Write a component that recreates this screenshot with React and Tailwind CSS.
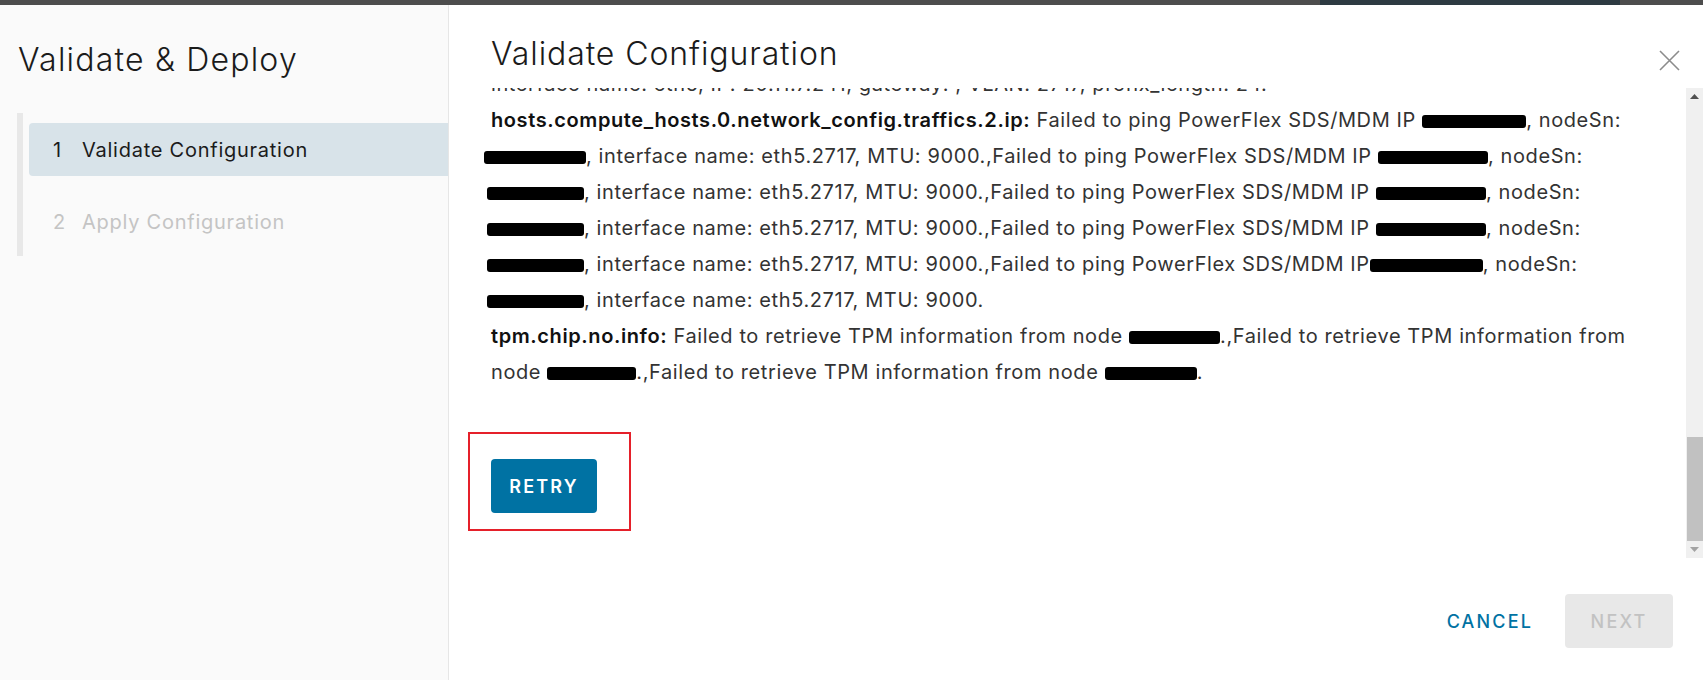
import React from "react";

const font = { fontFamily: "Inter, 'Noto Sans', sans-serif" };

function Redact({ w, shift = 0 }) {
  return (
    <span
      className="inline-block h-[13px] rounded-[3px] bg-black align-middle"
      style={{ width: w, marginLeft: shift }}
    />
  );
}

const rows = [
  [
    <b key="b" className="font-semibold text-[#111]">
      hosts.compute_hosts.0.network_config.traffics.2.ip:
    </b>,
    " Failed to ping PowerFlex SDS/MDM IP ",
    <Redact key="r" w={104} />,
    ", nodeSn:",
  ],
  [
    <Redact key="a" w={102} shift={-7} />,
    ", interface name: eth5.2717, MTU: 9000.,Failed to ping PowerFlex SDS/MDM IP ",
    <Redact key="r" w={110} />,
    ", nodeSn:",
  ],
  [
    <Redact key="a" w={97} shift={-4} />,
    ", interface name: eth5.2717, MTU: 9000.,Failed to ping PowerFlex SDS/MDM IP ",
    <Redact key="r" w={110} />,
    ", nodeSn:",
  ],
  [
    <Redact key="a" w={97} shift={-4} />,
    ", interface name: eth5.2717, MTU: 9000.,Failed to ping PowerFlex SDS/MDM IP ",
    <Redact key="r" w={110} />,
    ", nodeSn:",
  ],
  [
    <Redact key="a" w={97} shift={-4} />,
    ", interface name: eth5.2717, MTU: 9000.,Failed to ping PowerFlex SDS/MDM IP",
    <Redact key="r" w={113} />,
    ", nodeSn:",
  ],
  [
    <Redact key="a" w={97} shift={-4} />,
    ", interface name: eth5.2717, MTU: 9000.",
  ],
  [
    <b key="b" className="font-semibold text-[#111]">
      tpm.chip.no.info:
    </b>,
    " Failed to retrieve TPM information from node ",
    <Redact key="r" w={91} />,
    ".,Failed to retrieve TPM information from",
  ],
  [
    "node ",
    <Redact key="a" w={89} />,
    ".,Failed to retrieve TPM information from node ",
    <Redact key="r" w={92} />,
    ".",
  ],
];

function Steps() {
  return (
    <div className="ml-[17px] mt-[33px] border-l-[6px] border-[#e8e8e8] pt-[10px] pb-[8px]">
      <div className="ml-[6px] flex h-[53px] items-center rounded-l-[4px] bg-[#d8e3e9] pl-[24px] text-[20px] tracking-[0.75px] text-[#1b1b1b]">
        <span className="w-[29px]">1</span>
        <span>Validate Configuration</span>
      </div>
      <div className="ml-[6px] mt-[19px] flex h-[53px] items-center pl-[24px] text-[20px] tracking-[0.75px] text-[#c4c4c4]">
        <span className="w-[29px]">2</span>
        <span>Apply Configuration</span>
      </div>
    </div>
  );
}

function Scrollbar() {
  return (
    <div className="flex w-[17px] shrink-0 flex-col bg-[#f0f0f0]">
      <div className="flex h-[17px] items-center justify-center">
        <svg width="9" height="5" viewBox="0 0 9 5">
          <path d="M0 5 L4.5 0 L9 5 Z" fill="#505050" />
        </svg>
      </div>
      <div className="flex flex-1 flex-col justify-end">
        <div className="ml-[1px] h-[104px] bg-[#c1c1c1]" />
      </div>
      <div className="flex h-[17px] items-center justify-center">
        <svg width="9" height="5" viewBox="0 0 9 5">
          <path d="M0 0 L9 0 L4.5 5 Z" fill="#a3a3a3" />
        </svg>
      </div>
    </div>
  );
}

export default function App() {
  return (
    <div className="flex h-[680px] w-[1703px] flex-col overflow-hidden bg-white" style={font}>
      <div className="flex h-[5px] shrink-0 bg-[#4d4d4d]">
        <div className="ml-[1320px] h-full w-[300px] bg-[#2e3b42]" />
      </div>

      <div className="flex min-h-0 flex-1">
        <aside className="w-[449px] shrink-0 border-r border-[#e6e6e6] bg-[#fafafa]">
          <h1 className="pl-[18px] pt-[35px] text-[32px] font-light leading-[40px] tracking-[1.2px] text-[#1b1b1b]">
            Validate &amp; Deploy
          </h1>
          <Steps />
        </aside>

        <main className="flex min-w-0 flex-1 flex-col">
          <div className="flex h-[83px] shrink-0 items-start justify-between pl-[42px]">
            <h2 className="pt-[29px] text-[32px] font-light leading-[40px] tracking-[0.9px] text-[#1b1b1b]">
              Validate Configuration
            </h2>
            <button type="button" className="mr-[23px] mt-[45px] text-[#8c8c8c]">
              <svg width="21" height="21" viewBox="0 0 21 21" fill="none" stroke="currentColor" strokeWidth="1.6">
                <path d="M1 1 L20 20 M20 1 L1 20" />
              </svg>
            </button>
          </div>

          <div className="flex h-[470px] shrink-0">
            <div className="min-w-0 flex-1 overflow-hidden pl-[42px]">
              <div className="-mt-[22px] text-[20px] leading-[36px] tracking-[0.6px] text-[#333]">
                <div className="whitespace-nowrap">
                  interface name: eth6, IP: 20.11.7.241, gateway: , VLAN: 2717, prefix_length: 24.
                </div>
                {rows.map((r, i) => (
                  <div key={i} className="whitespace-nowrap">
                    {r}
                  </div>
                ))}
              </div>
              <div className="-ml-[23px] mt-[42px] inline-block border-2 border-[#e5202a] pb-[16px] pl-[21px] pr-[32px] pt-[25px]">
                <button
                  type="button"
                  className="h-[54px] w-[106px] rounded-[4px] bg-[#0072a3] text-[18px] font-semibold tracking-[0.12em] text-white"
                >
                  RETRY
                </button>
              </div>
            </div>
            <Scrollbar />
          </div>

          <div className="flex flex-1 items-start justify-end pr-[30px] pt-[36px]">
            <button
              type="button"
              className="mr-[14px] h-[54px] px-[18px] text-[18px] font-medium tracking-[0.12em] text-[#0072a3]"
            >
              CANCEL
            </button>
            <button
              type="button"
              className="h-[54px] w-[108px] rounded-[4px] bg-[#e8e8e8] text-[18px] font-medium tracking-[0.12em] text-[#c2c2c2]"
            >
              NEXT
            </button>
          </div>
        </main>
      </div>
    </div>
  );
}
